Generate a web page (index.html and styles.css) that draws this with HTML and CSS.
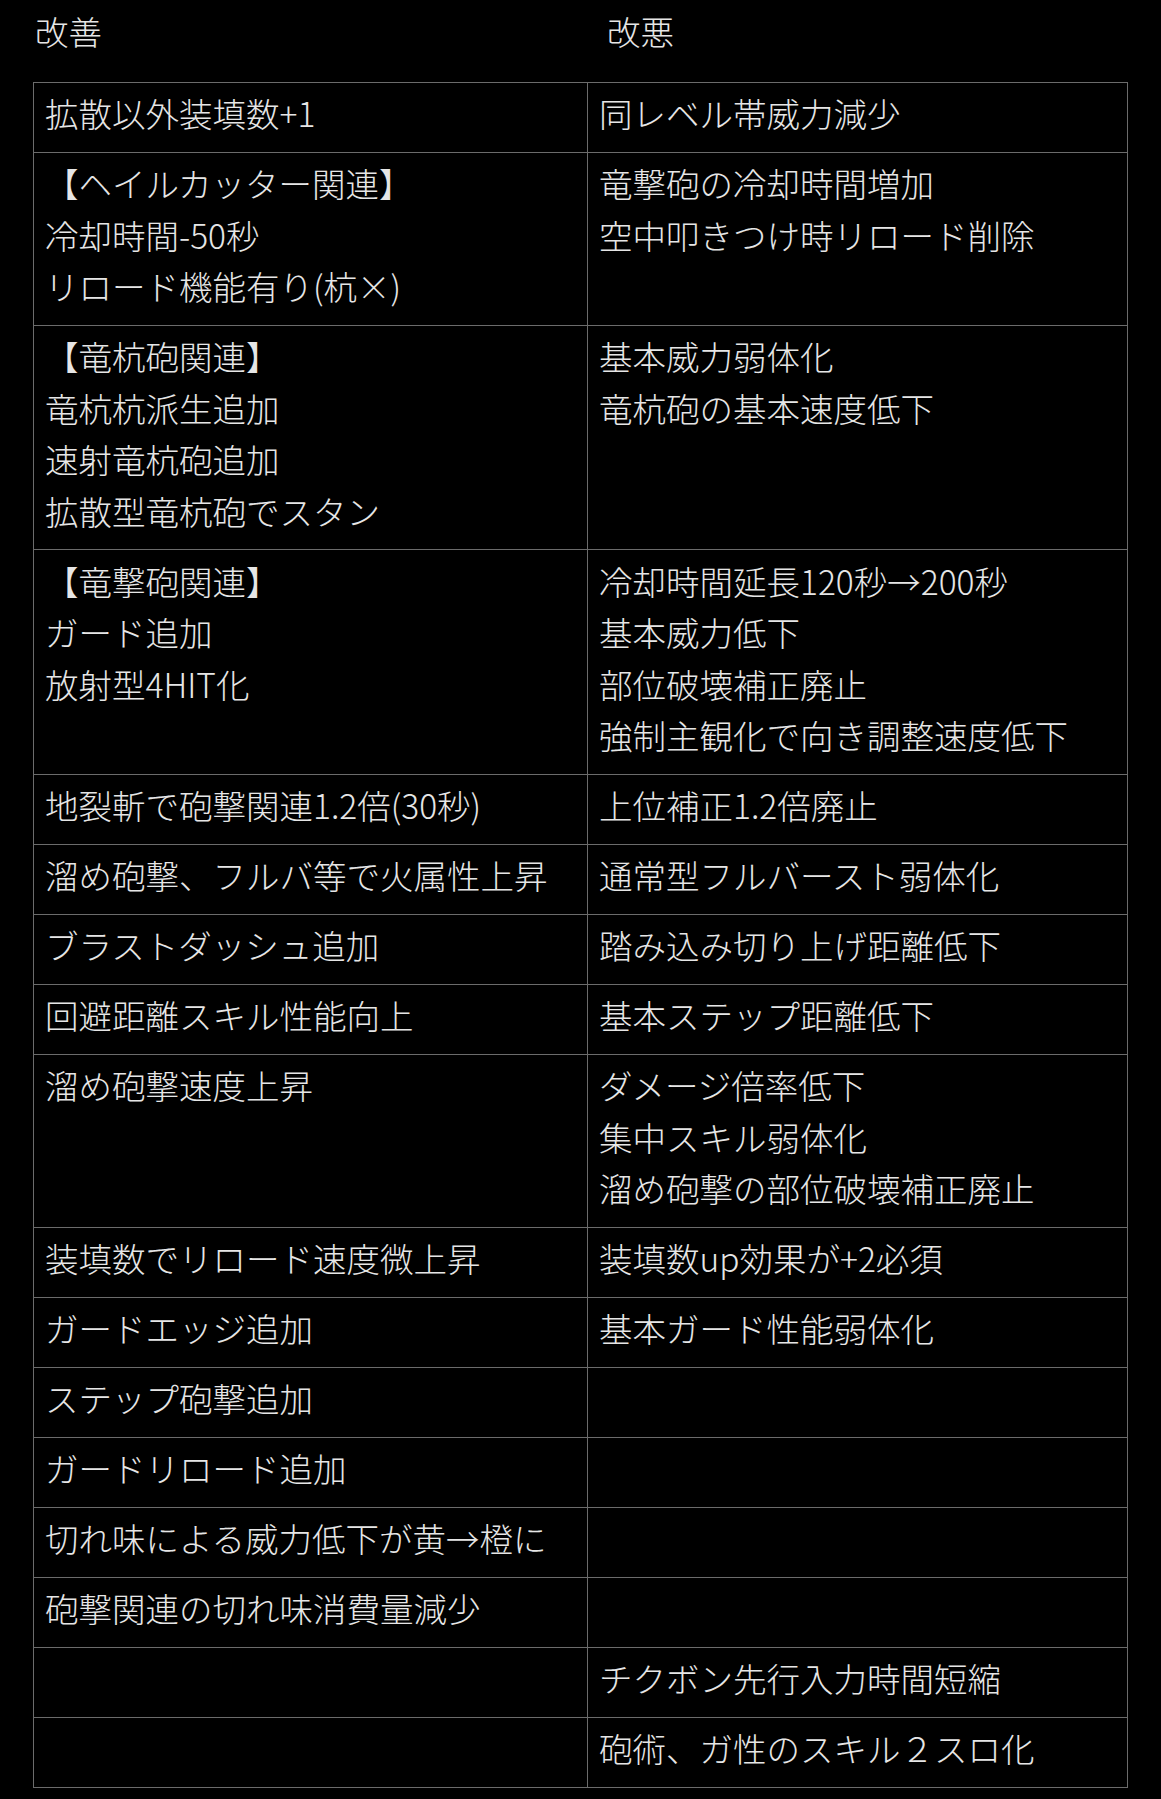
FILE: index.html
```html
<!DOCTYPE html>
<html lang="ja">
<head>
<meta charset="utf-8">
<link rel="stylesheet" href="styles.css">
<title>改善・改悪</title>
</head>
<body>
<div class="page">
  <div class="heads">
    <div class="head head-good">改善</div>
    <div class="head head-bad">改悪</div>
  </div>
  <table class="cmp">
    <colgroup><col class="c-left"><col class="c-right"></colgroup>
    <tbody>
      <tr><td>拡散以外装填数+1</td><td>同レベル帯威力減少</td></tr>
      <tr><td>【ヘイルカッター関連】<br>冷却時間-50秒<br>リロード機能有り(杭×)</td><td>竜撃砲の冷却時間増加<br>空中叩きつけ時リロード削除</td></tr>
      <tr><td>【竜杭砲関連】<br>竜杭杭派生追加<br>速射竜杭砲追加<br>拡散型竜杭砲でスタン</td><td>基本威力弱体化<br>竜杭砲の基本速度低下</td></tr>
      <tr><td>【竜撃砲関連】<br>ガード追加<br>放射型4HIT化</td><td>冷却時間延長120秒→200秒<br>基本威力低下<br>部位破壊補正廃止<br>強制主観化で向き調整速度低下</td></tr>
      <tr><td>地裂斬で砲撃関連1.2倍(30秒)</td><td>上位補正1.2倍廃止</td></tr>
      <tr><td>溜め砲撃、フルバ等で火属性上昇</td><td>通常型フルバースト弱体化</td></tr>
      <tr><td>ブラストダッシュ追加</td><td>踏み込み切り上げ距離低下</td></tr>
      <tr><td>回避距離スキル性能向上</td><td>基本ステップ距離低下</td></tr>
      <tr><td>溜め砲撃速度上昇</td><td>ダメージ倍率低下<br>集中スキル弱体化<br>溜め砲撃の部位破壊補正廃止</td></tr>
      <tr><td>装填数でリロード速度微上昇</td><td>装填数up効果が+2必須</td></tr>
      <tr><td>ガードエッジ追加</td><td>基本ガード性能弱体化</td></tr>
      <tr><td>ステップ砲撃追加</td><td></td></tr>
      <tr><td>ガードリロード追加</td><td></td></tr>
      <tr><td>切れ味による威力低下が黄→橙に</td><td></td></tr>
      <tr><td>砲撃関連の切れ味消費量減少</td><td></td></tr>
      <tr><td></td><td>チクボン先行入力時間短縮</td></tr>
      <tr><td></td><td>砲術、ガ性のスキル２スロ化</td></tr>
    </tbody>
  </table>
</div>
</body>
</html>
```

FILE: styles.css
```css
html, body {
  margin: 0;
  padding: 0;
  background: #000;
}

.page {
  padding: 4.5px 0 0 33px;
  width: 1094px;
  color: #e6e6e6;
  font-family: "Noto Sans CJK JP", "Noto Sans", sans-serif;
  font-size: 33.5px;
  font-weight: 300;
  line-height: 51.5px;
}

.heads {
  display: grid;
  grid-template-columns: 554px 540px;
  margin-bottom: 25.5px;
}

.head-good {
  padding-left: 2px;
}

.head-bad {
  padding-left: 20px;
}

.cmp {
  border-collapse: collapse;
  width: 1094px;
  table-layout: fixed;
}

.c-left {
  width: 554px;
}

.c-right {
  width: 540px;
}

.cmp td {
  border: 1px solid #6b6b6b;
  padding: 4.5px 11px 13px 11px;
  vertical-align: top;
  white-space: nowrap;
  height: 51.5px;
}
```
